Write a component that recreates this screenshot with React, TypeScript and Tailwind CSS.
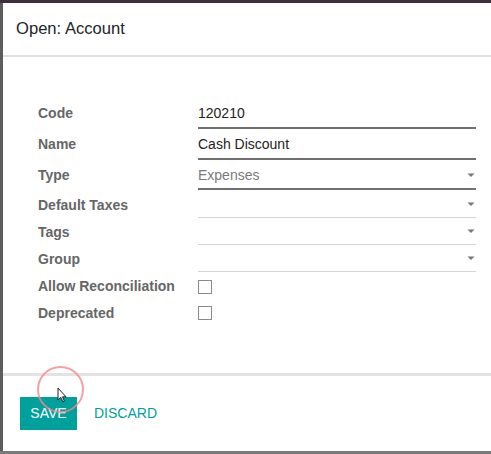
import React from 'react';

type Row = {
  label: string;
  kind: 'input' | 'select' | 'many' | 'check';
  value?: string;
  h: number;
};

const rows: Row[] = [
  { label: 'Code', kind: 'input', value: '120210', h: 31 },
  { label: 'Name', kind: 'input', value: 'Cash Discount', h: 31 },
  { label: 'Type', kind: 'select', value: 'Expenses', h: 30 },
  { label: 'Default Taxes', kind: 'many', h: 27 },
  { label: 'Tags', kind: 'many', h: 27 },
  { label: 'Group', kind: 'many', h: 27 },
  { label: 'Allow Reconciliation', kind: 'check', h: 27 },
  { label: 'Deprecated', kind: 'check', h: 26 },
];

function Caret() {
  return (
    <svg width="8" height="5" viewBox="0 0 8 5" className="shrink-0">
      <path d="M0.5 0.5 L7.5 0.5 L4 4 Z" fill="#777" />
    </svg>
  );
}

function Field({ row }: { row: Row }) {
  if (row.kind === 'check') {
    return (
      <div className="flex h-full items-center">
        <div className="h-[14px] w-[14px] border border-[#8a8a8a] bg-white" />
      </div>
    );
  }
  if (row.kind === 'input') {
    return (
      <div className="flex h-[29px] items-center border-b-2 border-[#707070] text-[14px] text-[#222]">
        {row.value}
      </div>
    );
  }
  if (row.kind === 'select') {
    return (
      <div className="flex h-[28px] items-center justify-between border-b-2 border-[#707070] pr-[1px] text-[14px] text-[#7a7a7a]">
        <span>{row.value}</span>
        <Caret />
      </div>
    );
  }
  return (
    <div className="flex h-[26px] items-center justify-end border-b border-[#d4d4d4] pr-[1px]">
      <Caret />
    </div>
  );
}

export default function App() {
  return (
    <div
      className="relative flex h-[454px] w-[491px] flex-col overflow-hidden bg-[#5a5a5a]"
      style={{ fontFamily: '"Liberation Sans", Arial, sans-serif' }}
    >
      <div className="h-[3px] bg-[#3f2f3e]" />
      <div className="flex flex-1">
        <div className="w-[3px] bg-[#5c5c5c]" />
        <div className="flex flex-1 flex-col bg-white">
          {/* header */}
          <div className="flex h-[54px] items-center border-b-2 border-[#dfe2e2] pl-[13px] pt-[1px] text-[16.6px] text-[#212529]">
            Open: Account
          </div>

          {/* body */}
          <div className="flex-1 border-b-[3px] border-[#e3e3e3] pl-[35px] pr-[15px] pt-[43px]">
            {rows.map((row) => (
              <div key={row.label} className="flex" style={{ height: row.h }}>
                <div className="flex h-[27px] w-[160px] items-center text-[14px] font-bold text-[#666]">
                  {row.label}
                </div>
                <div className="flex-1">
                  <Field row={row} />
                </div>
              </div>
            ))}
          </div>

          {/* footer */}
          <div className="flex h-[75px] items-center gap-[17px] pl-[17px] pb-[1px]">
            <button className="h-[33px] w-[57px] bg-[#00a09d] text-[14px] text-white">
              SAVE
            </button>
            <button className="text-[14px] text-[#00a09d]">DISCARD</button>
          </div>
        </div>
      </div>
      <div className="h-[3px] bg-[#7b7b7b]" />

      {/* click indicator + cursor */}
      <div className="pointer-events-none absolute left-[37px] top-[366px] h-[47px] w-[47px] rounded-full border-2 border-[#f08a8a]/80" />
      <svg
        className="pointer-events-none absolute left-[57px] top-[387px]"
        width="10"
        height="16"
        viewBox="0 0 10 16"
      >
        <path
          d="M1 1 L1 13 L3.8 10.4 L5.8 14.8 L7.4 14.1 L5.5 9.8 L9 9.8 Z"
          fill="#fff"
          stroke="#222"
          strokeWidth="1"
          strokeLinejoin="round"
        />
      </svg>
    </div>
  );
}
